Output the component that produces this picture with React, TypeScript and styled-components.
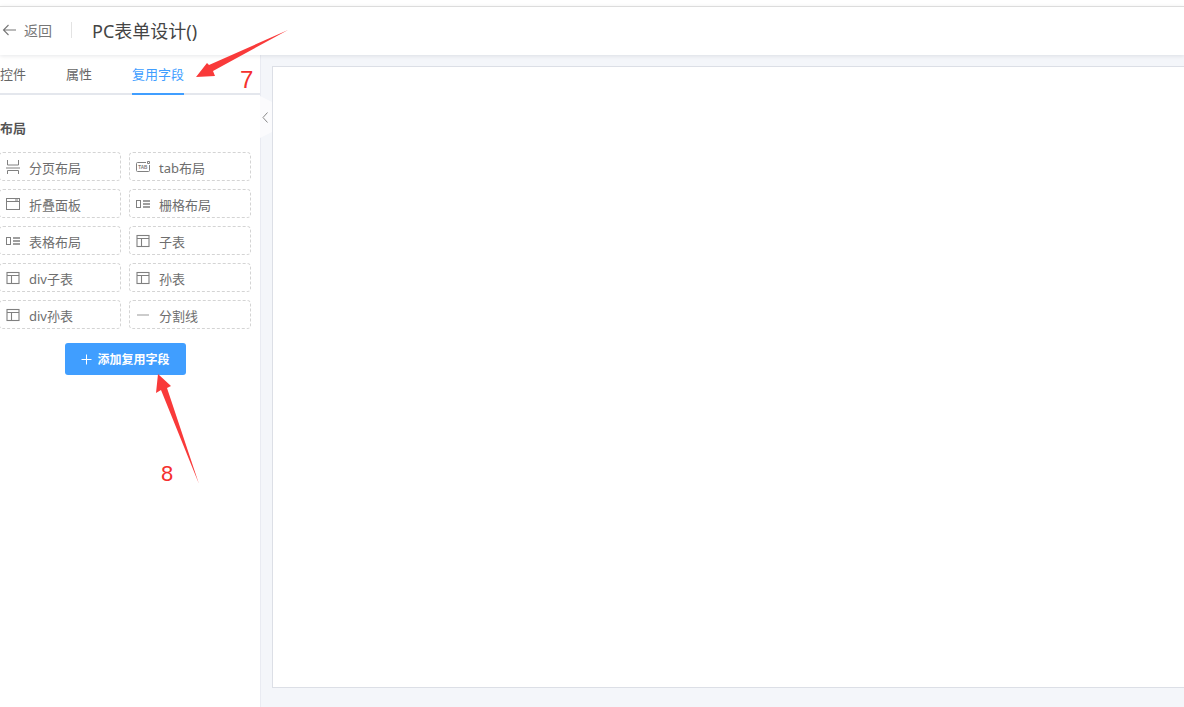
import React, { ReactElement } from 'react';
import styled, { createGlobalStyle } from 'styled-components';

const GlobalStyle = createGlobalStyle`
  html, body {
    margin: 0;
    padding: 0;
    height: 707px;
    overflow: hidden;
    background: #fff;
    font-family: "Noto Sans", "Noto Sans CJK SC", sans-serif;
  }
`;

const Page = styled.div`
  position: relative;
  width: 1184px;
  height: 707px;
  display: flex;
  flex-direction: column;
  overflow: hidden;
  background: #f4f6fa;
  padding-top: 6px;
  box-sizing: border-box;
`;

const TopStrip = styled.div`
  position: absolute;
  left: 0;
  top: 0;
  width: 100%;
  height: 6px;
  background: #fff;
`;

const Header = styled.header`
  position: relative;
  z-index: 2;
  height: 49px;
  flex: none;
  box-sizing: border-box;
  border-top: 1px solid #dcdcdc;
  background: #fff;
  box-shadow: 0 1px 4px rgba(0, 21, 41, 0.1);
  display: flex;
  align-items: center;
  padding: 0 0 2px 2px;
`;

const BackLink = styled.div`
  display: flex;
  align-items: center;
  gap: 7px;
  color: #777;
  font-size: 14px;
  width: 69px;
`;

const Divider = styled.div`
  width: 1px;
  height: 16px;
  background: #e3e3e3;
  margin-right: 20px;
`;

const Title = styled.div`
  font-size: 18px;
  color: #444;
`;

const Body = styled.div`
  flex: 1;
  display: flex;
  min-height: 0;
`;

const Sidebar = styled.aside`
  position: relative;
  width: 261px;
  flex: none;
  box-sizing: border-box;
  background: #fff;
  border-right: 1px solid #e9ebf2;
`;

const TabBar = styled.div`
  height: 40px;
  box-sizing: border-box;
  display: flex;
  gap: 40px;
  border-bottom: 2px solid #e4e7ed;
`;

const Tab = styled.div<{ $active?: boolean }>`
  height: 40px;
  box-sizing: border-box;
  padding-top: 9px;
  margin-bottom: -2px;
  font-size: 13px;
  line-height: 20px;
  color: ${(p) => (p.$active ? '#409eff' : '#666')};
  border-bottom: 2px solid ${(p) => (p.$active ? '#409eff' : 'transparent')};
`;

const SectionTitle = styled.div`
  margin-top: 23px;
  font-size: 13px;
  line-height: 20px;
  font-weight: 700;
  color: #555;
`;

const Palette = styled.div`
  margin: 14px 0 0 -1px;
  display: grid;
  grid-template-columns: 122px 122px;
  grid-auto-rows: 29px;
  gap: 8px;
`;

const Item = styled.div`
  box-sizing: border-box;
  border: 1px dashed #d4d4d4;
  border-radius: 4px;
  display: flex;
  align-items: center;
  padding-left: 6px;
  gap: 9px;
  font-size: 13px;
  color: #6e6e6e;
  white-space: nowrap;
`;

const ItemLabel = styled.span`
  padding-top: 2px;
`;

const IconBox = styled.svg`
  width: 14px;
  height: 14px;
  flex: none;
  fill: none;
  stroke: #808080;
  stroke-width: 1;
`;

const AddRow = styled.div`
  display: flex;
  margin: 14px 0 0 65px;
`;

const AddButton = styled.div`
  width: 121px;
  height: 32px;
  background: #409eff;
  border-radius: 3px;
  color: #fff;
  font-size: 12px;
  font-weight: 700;
  display: flex;
  align-items: center;
  justify-content: center;
  gap: 5px;
`;

const Handle = styled.div`
  position: absolute;
  left: 260px;
  top: 41px;
  width: 12px;
  height: 42px;
  background: #fbfbfd;
  clip-path: polygon(0 0, 100% 14%, 100% 86%, 0 100%);
  display: flex;
  align-items: center;
  padding-left: 2px;
  box-sizing: border-box;
`;

const Main = styled.main`
  flex: 1;
  min-width: 0;
  padding: 11px 0 19px 11px;
  display: flex;
`;

const Canvas = styled.div`
  flex: 1;
  background: #fff;
  border: 1px solid #dcdfe6;
  border-right: none;
`;

const Overlay = styled.svg`
  position: absolute;
  left: 0;
  top: 0;
  z-index: 3;
  pointer-events: none;
`;

const Mark = styled.div<{ $size: number }>`
  position: absolute;
  z-index: 3;
  color: #f5302e;
  font-family: "Liberation Sans", Arial, sans-serif;
  font-size: ${(p) => p.$size}px;
  line-height: 1;
`;

const Mark7 = styled(Mark)`
  left: 240px;
  top: 68px;
`;

const Mark8 = styled(Mark)`
  left: 161px;
  top: 463px;
`;

const PagesIcon = () => (
  <IconBox viewBox="0 0 14 14">
    <path d="M1.5 0v5h11V0M0 8h14M1.5 14V10.5h11V14" />
  </IconBox>
);

const TabIcon = () => (
  <IconBox viewBox="0 0 14 14">
    <path d="M10 2.5H1.5a1 1 0 0 0-1 1v7a1 1 0 0 0 1 1h11a1 1 0 0 0 1-1V5" />
    <path d="M11.5 1.5h2v2h-2z" />
    <text x="2.3" y="9" fontSize="4.6" fontFamily="Liberation Sans" stroke="none" fill="#777" fontWeight="700">
      TAB
    </text>
  </IconBox>
);

const PanelIcon = () => (
  <IconBox viewBox="0 0 14 14">
    <rect x="0.5" y="1.5" width="13" height="11" />
    <path d="M0.5 4.5h13M9 3h3" />
  </IconBox>
);

const GridIcon = () => (
  <IconBox viewBox="0 0 14 14">
    <rect x="0.5" y="3.5" width="4" height="7" />
    <path d="M7 4h7M7 7h7M7 10h7" strokeWidth="1.4" />
  </IconBox>
);

const TableIcon = () => (
  <IconBox viewBox="0 0 14 14">
    <rect x="1" y="1.5" width="12" height="11" strokeWidth="1.1" />
    <path d="M1 4.5h12M5.5 4.5v8" strokeWidth="1.1" />
  </IconBox>
);

const LineIcon = () => (
  <IconBox viewBox="0 0 14 14">
    <path d="M1 7h12" stroke="#999" />
  </IconBox>
);

const items = [
  { label: '分页布局', icon: <PagesIcon /> },
  { label: 'tab布局', icon: <TabIcon /> },
  { label: '折叠面板', icon: <PanelIcon /> },
  { label: '栅格布局', icon: <GridIcon /> },
  { label: '表格布局', icon: <GridIcon /> },
  { label: '子表', icon: <TableIcon /> },
  { label: 'div子表', icon: <TableIcon /> },
  { label: '孙表', icon: <TableIcon /> },
  { label: 'div孙表', icon: <TableIcon /> },
  { label: '分割线', icon: <LineIcon /> },
];

const App = (): ReactElement => (
  <Page>
    <GlobalStyle />
    <TopStrip />
    <Header>
      <BackLink>
        <svg width="15" height="12" viewBox="0 0 15 12" fill="none" stroke="#777" strokeWidth="1.1">
          <path d="M14 6H1.5M6.5 1L1.5 6l5 5" />
        </svg>
        返回
      </BackLink>
      <Divider />
      <Title>PC表单设计()</Title>
    </Header>
    <Body>
      <Sidebar>
        <TabBar>
          <Tab>控件</Tab>
          <Tab>属性</Tab>
          <Tab $active>复用字段</Tab>
        </TabBar>
        <SectionTitle>布局</SectionTitle>
        <Palette>
          {items.map((item) => (
            <Item key={item.label}>
              {item.icon}
              <ItemLabel>{item.label}</ItemLabel>
            </Item>
          ))}
        </Palette>
        <AddRow>
          <AddButton>
            <svg width="11" height="11" viewBox="0 0 11 11" stroke="#fff" strokeWidth="1">
              <path d="M5.5 0.5v10M0.5 5.5h10" />
            </svg>
            添加复用字段
          </AddButton>
        </AddRow>
        <Handle>
          <svg width="6" height="11" viewBox="0 0 6 11" fill="none" stroke="#888" strokeWidth="1">
            <path d="M5.5 0.5l-4.5 5 4.5 5" />
          </svg>
        </Handle>
      </Sidebar>
      <Main>
        <Canvas />
      </Main>
    </Body>
    <Overlay width="1184" height="707" viewBox="0 0 1184 707">
      <polygon points="288,30 213,71 215,76 196,77 207,63 209,65" fill="#f93a3a" />
      <polygon points="199,484 167,388 171,386 158,374 156,393 161,390" fill="#f93a3a" />
    </Overlay>
    <Mark7 $size={24}>7</Mark7>
    <Mark8 $size={22}>8</Mark8>
  </Page>
);

export default App;
